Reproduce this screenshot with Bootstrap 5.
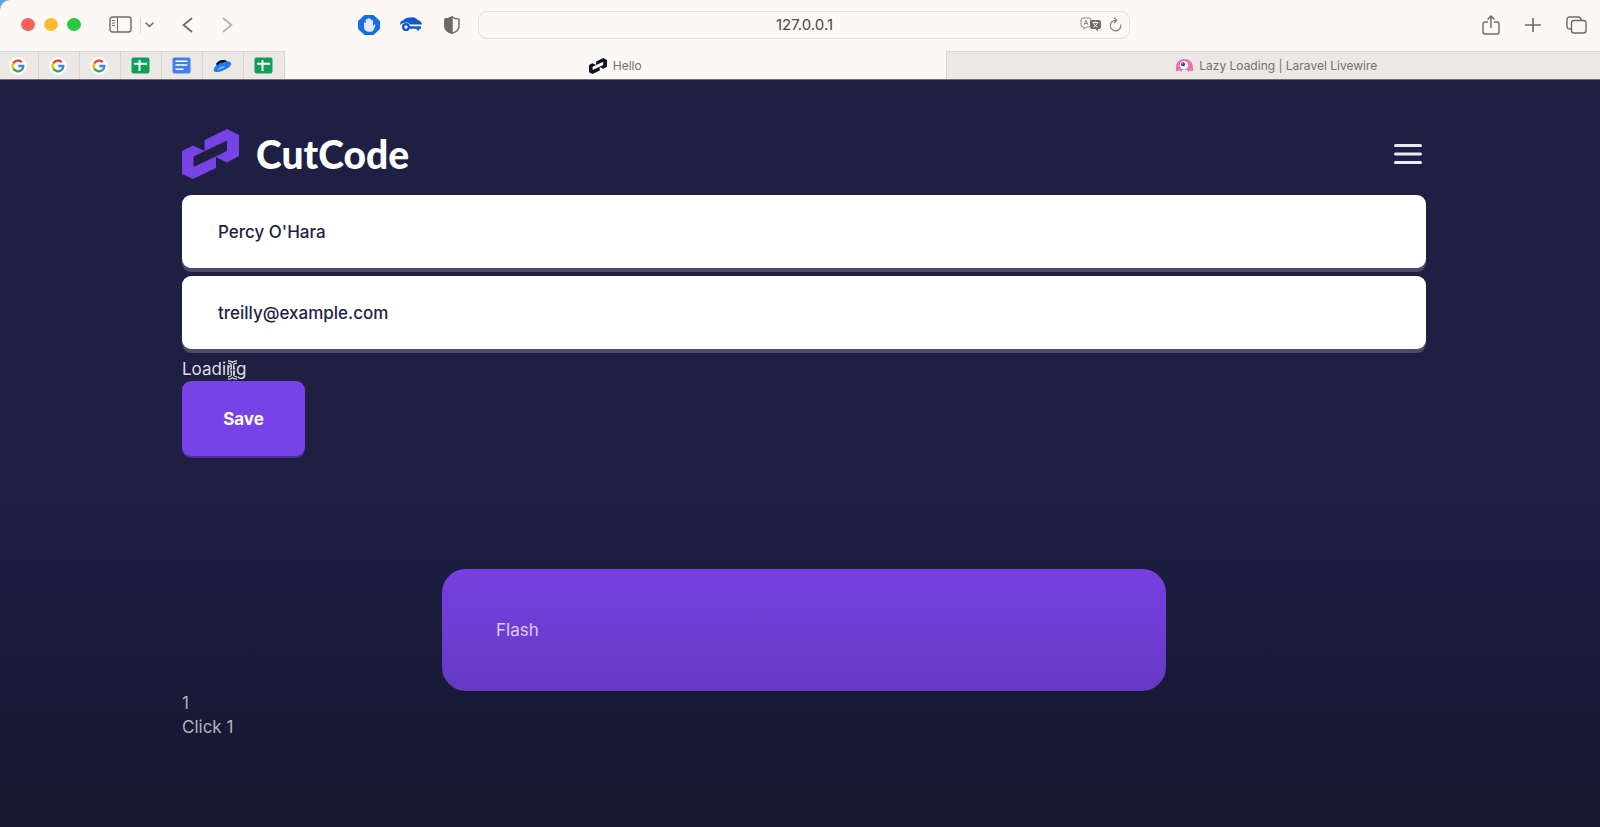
<!DOCTYPE html>
<html lang="en">
<head>
<meta charset="utf-8">
<meta name="viewport" content="width=device-width, initial-scale=1">
<title>Hello</title>
<link href="https://cdn.jsdelivr.net/npm/bootstrap@5.3.0/dist/css/bootstrap.min.css" rel="stylesheet">
<style>
  body { font-family: Inter, "Liberation Sans", sans-serif; background: #58a8dc; min-height: 100vh; overflow-x: hidden; }
  svg { display: block; flex: none; }
  .chrome { background: #fcf8f5; border-top-left-radius: 10px; color: #6d6966; }
  .toolbar { display: grid; grid-template-columns: 1fr 652px 1fr; height: 51px; padding: 0 0 2px 8px; }
  .chrome button { background: none; border: 0; padding: 0; color: inherit; }
  .lights { gap: 9px; margin-left: 13px; }
  .dot { width: 14px; height: 13px; border-radius: 50%; }
  .dot-close { background: #fc5f58; }
  .dot-min { background: #fcbb2e; }
  .dot-max { background: #28c840; }
  .history { gap: 29px; margin-left: 28px; }
  .extensions { gap: 20px; margin-right: 18px; }
  .actions { gap: 25px; padding-right: 13px; }
  .address { height: 28px; border: 1px solid #e4dfdc; border-radius: 9px; background: #fcf8f5; gap: 8px; padding-right: 7px; }
  .address input { background: none; border: 0; outline: 0; text-align: center; font-size: 15px; color: #4b4846; padding: 2px 0 0 58px; min-width: 0; }
  .tabstrip { height: 29px; margin-right: -8px; border-bottom: 1px solid #6f706a; font-size: 12px; }
  .tabstrip a { color: #75716f; text-decoration: none; }
  .wide-tab { flex: 1 1 0; gap: 6px; border-top: 1px solid transparent; }
  .idle { background: #ece8e5; border-top: 1px solid #dbd7d4; border-right: 1px solid #d8d4d1; }
  .pin { flex: 0 0 41px; padding-right: 2px; }
  .pin:first-child { flex-basis: 39px; }
  .idle-wide { border-left: 1px solid #d8d4d1; }
  .site { background: linear-gradient(#1e1f43 0%, #1e1f43 55%, #15162f 100%); color: #dcdce1; font-size: 17px; line-height: 24px; padding: 49px 174px 48px 182px; }
  .brand { font-family: Lato, sans-serif; font-weight: 900; font-size: 39px; line-height: 50px; color: #fff; text-decoration: none; gap: 17px; }
  .burger { background: none; border: 0; padding: 0 4px; }
  .field { height: 73px; border: 0; border-radius: 9px; padding: 0 36px; font-size: 17px; font-weight: 500; color: #1e1f43; background: #fff; box-shadow: 0 4px 0 #4b4b69; }
  .field:focus { color: #1e1f43; }
  .save { width: 123px; height: 75px; border: 0; border-radius: 9px; background: #7843e6; color: #fff; font-size: 17px; font-weight: 700; box-shadow: 0 2px 0 #4c2f98; }
  .cursor { position: absolute; left: 44px; top: 3px; }
  .flash { width: 58.2%; margin: 113px auto 0; padding: 49px 54px; border-radius: 24px; background: linear-gradient(#7640e0, #6539c4); color: #dccdf3; }
  .clicker { background: none; border: 0; padding: 0; color: inherit; line-height: 24px; }
  .foot { color: #b5b5b9; }
</style>
</head>
<body class="d-flex flex-column">
<svg width="0" height="0" class="position-absolute" aria-hidden="true">
  <symbol id="g" viewBox="0 0 18 18"><circle cx="9" cy="9" r="9" fill="#fff"/><g fill="none" stroke-width="2.4"><path d="M4.3 6.3A5.3 5.3 0 0 1 12.8 5.2" stroke="#e94335"/><path d="M4.4 11.7a5.3 5.3 0 0 1-.1-5.4" stroke="#fbbc05"/><path d="M12.6 12.9a5.3 5.3 0 0 1-8.2-1.2" stroke="#34a853"/><path d="M9.2 9h5.1a5.3 5.3 0 0 1-1.7 3.9" stroke="#4285f4"/></g></symbol>
  <symbol id="sheet" viewBox="0 0 19 17"><rect x=".5" y=".5" width="18" height="16" rx="2" fill="#109d58"/><path d="M8.5 3v11M3 6.8h13" stroke="#fff" stroke-width="2"/></symbol>
  <symbol id="mark-cc" viewBox="0 0 57 50"><path fill-rule="evenodd" d="M0 22L11 16.500 22.500 22V11L45 0 57 6v21L45 33.500 34 28V39L11 50 0 45zM11.500 27.500V38L45 22V11.500z" fill="currentColor"/></symbol>
</svg>

<header class="chrome">
  <div class="toolbar align-items-center">
    <div class="d-flex align-items-center">
      <div class="lights d-flex">
        <span class="dot dot-close"></span><span class="dot dot-min"></span><span class="dot dot-max"></span>
      </div>
      <button class="ms-4 ps-1" aria-label="Sidebar"><svg width="23" height="17" fill="none" stroke="currentColor" stroke-width="1.400"><rect x="1" y="1" width="21" height="15" rx="2.500"/><path d="M8.500 1v15M3 4.500h3M3 7h3M3 9.500h3" stroke-width="1"/></svg></button>
      <span class="vr ms-2 me-1 my-1 opacity-10"></span>
      <button aria-label="Tab groups"><svg width="9" height="6" fill="none" stroke="currentColor" stroke-width="1.500" stroke-linecap="round"><path d="M1 1l3.500 3.500L8 1"/></svg></button>
      <div class="history d-flex">
        <button aria-label="Back"><svg width="11" height="16" fill="none" stroke="currentColor" stroke-width="1.700" stroke-linecap="round"><path d="M9.500 1.500L1.500 8l8 6.500"/></svg></button>
        <button class="opacity-50" aria-label="Forward"><svg width="11" height="16" fill="none" stroke="currentColor" stroke-width="1.700" stroke-linecap="round"><path d="M1.500 1.500L9.500 8l-8 6.500"/></svg></button>
      </div>
      <div class="extensions d-flex align-items-center ms-auto">
        <button aria-label="Ad blocker"><svg width="22" height="20"><path d="M6.500 0h9L22 6v8l-6.500 6h-9L0 14V6z" fill="#176ce8"/><path d="M6 8.500a.9.900 0 0 1 1.800-.3V5a.9.900 0 0 1 1.800 0V4a.9.900 0 0 1 1.800 0v.6a.9.900 0 0 1 1.800 0V6a.9.900 0 0 1 1.800 0v5.500l1-1.700c.5-.7 1.500-.2 1.300.6l-1.500 4c-.6 1.500-1.800 2.400-3.300 2.400h-1.500C8 16.800 6 15 6 12.500z" fill="#e6e8ee"/></svg></button>
        <button aria-label="VPN"><svg width="22" height="15"><path d="M0 8C0 5 1 4 3 3.500 5 1 8 0 11 .5c2-.5 5 .2 6 2 2 .5 5 2.500 5 5H10C8 4.500 2.500 5 0 8z" fill="#1058cf"/><circle cx="6" cy="10" r="2.900" fill="none" stroke="#1058cf" stroke-width="2.400"/><path d="M9 10.500h12M18 10.500v3" stroke="#1058cf" stroke-width="2.400"/></svg></button>
        <button aria-label="Privacy report"><svg width="18" height="18" viewBox="-2 0 18 18" fill="none" stroke="currentColor" stroke-width="1.400"><path d="M8 1C6 2.500 3.500 3 1 3.200V10c0 4 3 6 7 7.300 4-1.300 7-3.300 7-7.300V3.200C12.500 3 10 2.500 8 1z"/><path d="M8 1C6 2.500 3.500 3 1 3.200V10c0 4 3 6 7 7.300z" fill="currentColor"/></svg></button>
      </div>
    </div>
    <div class="address d-flex align-items-center">
      <input class="flex-grow-1" aria-label="Address" value="127.0.0.1">
      <button aria-label="Translate"><svg width="21" height="15"><path d="M3 1h6a2 2 0 0 1 2 2v5a2 2 0 0 1-2 2H6l-2.200 2v-2H3a2 2 0 0 1-2-2V3a2 2 0 0 1 2-2z" fill="none" stroke="#8e8a87"/><path d="M4 8l2-5 2 5M4.600 6.500h3" fill="none" stroke="#8e8a87"/><path d="M12 3h7a2 2 0 0 1 2 2v5a2 2 0 0 1-2 2h-1v2.500L15.500 12H12a2 2 0 0 1-2-2V5a2 2 0 0 1 2-2z" fill="#716d6a"/><path d="M12.500 5.500h6M15.500 4.500v1M13.500 10c2-1 3.500-2.500 4-4.500M13.500 5.500c.5 2 2 3.500 4 4.500" stroke="#fff" fill="none" stroke-width=".9"/></svg></button>
      <button aria-label="Reload"><svg width="13" height="15" fill="none" stroke="#85817e" stroke-width="1.200"><path d="M11.800 7.500A5.300 5.300 0 1 1 7 3.300M5 .8l2.800 2.500L5 6"/></svg></button>
    </div>
    <div class="actions d-flex align-items-center justify-content-end">
      <button aria-label="Share"><svg width="18" height="20" fill="none" stroke="currentColor" stroke-width="1.400"><path d="M6 7H3a2 2 0 0 0-2 2v8a2 2 0 0 0 2 2h12a2 2 0 0 0 2-2V9a2 2 0 0 0-2-2h-3M9 13V1.500M5.500 4.500L9 1l3.500 3.500"/></svg></button>
      <button aria-label="New tab"><svg width="16" height="16" stroke="currentColor" stroke-width="1.600"><path d="M8 1v14M0 8h16"/></svg></button>
      <button aria-label="All tabs"><svg width="21" height="18" fill="none" stroke="currentColor" stroke-width="1.400"><rect x="5.500" y="4.500" width="14.500" height="12.500" rx="2.500"/><path d="M5.500 13H3.500A2.500 2.500 0 0 1 1 10.500v-7A2.500 2.500 0 0 1 3.500 1h9A2.500 2.500 0 0 1 15 3.500v1"/></svg></button>
    </div>
  </div>
  <nav class="tabstrip d-flex" aria-label="Tabs">
    <a href="#" class="pin idle d-flex align-items-center justify-content-center" aria-label="Google"><svg width="18" height="18"><use href="#g"/></svg></a>
    <a href="#" class="pin idle d-flex align-items-center justify-content-center" aria-label="Google"><svg width="18" height="18"><use href="#g"/></svg></a>
    <a href="#" class="pin idle d-flex align-items-center justify-content-center" aria-label="Google"><svg width="18" height="18"><use href="#g"/></svg></a>
    <a href="#" class="pin idle d-flex align-items-center justify-content-center" aria-label="Sheet"><svg width="19" height="17"><use href="#sheet"/></svg></a>
    <a href="#" class="pin idle d-flex align-items-center justify-content-center" aria-label="Document"><svg width="19" height="17"><rect x=".5" y=".5" width="18" height="16" rx="2" fill="#4080ee"/><path d="M3.500 4.300h12M3.500 8h12M3.500 12.200h8" stroke="#fff" stroke-width="1.500"/></svg></a>
    <a href="#" class="pin idle d-flex align-items-center justify-content-center" aria-label="Disc"><svg width="19" height="14"><path d="M1 12C0 9 4 5 9 3c4-1.500 8-1 9 1 .6 2-1 4-4 5.500C10 12 3 14.500 1 12z" fill="#1d78f0"/><path d="M3 5C5 1.500 9 .3 13 1.500c1 .5 1 1-.5 1.500C9 3 6 4.500 4 6.500z" fill="#06060c"/><path d="M4 10.500c2-2 5-3.500 8-3.500 0 1.500-4 3.500-8 3.500z" fill="#7dbdf8"/></svg></a>
    <a href="#" class="pin idle d-flex align-items-center justify-content-center" aria-label="Sheet"><svg width="19" height="17"><use href="#sheet"/></svg></a>
    <a href="#" class="wide-tab d-flex align-items-center justify-content-center" aria-current="page"><svg width="18" height="16" color="#12112a"><use href="#mark-cc"/></svg><span>Hello</span></a>
    <a href="#" class="wide-tab idle idle-wide d-flex align-items-center justify-content-center"><svg width="17" height="13"><path d="M0 8.500C0 3.500 3.500 0 8.500 0S17 3.500 17 8.500V12h-2l-1-1-1.500 2-1.500-2H6.500L5 13l-1.500-2L2 12H0z" fill="#ee6fac"/><ellipse cx="8" cy="6.300" rx="4.200" ry="4.200" fill="#fff"/><circle cx="7" cy="5.300" r="2" fill="#31307c"/><circle cx="6.500" cy="4.800" r=".6" fill="#fff"/></svg><span>Lazy Loading | Laravel Livewire</span></a>
  </nav>
</header>

<main class="site flex-grow-1">
  <div class="d-flex align-items-center justify-content-between">
    <a href="#" class="brand d-flex align-items-center"><svg width="57" height="50" color="#7843e6"><use href="#mark-cc"/></svg>CutCode</a>
    <button class="burger" aria-label="Menu"><svg width="28" height="20" stroke="#ececf2" stroke-width="3" stroke-linecap="round"><path d="M1.500 1.500h25M1.500 10h25M1.500 18.500h25"/></svg></button>
  </div>
  <form class="mt-3">
    <input class="form-control field mb-2" aria-label="Name" value="Percy O'Hara">
    <input class="form-control field mb-2" type="email" aria-label="Email" value="treilly@example.com">
    <div class="position-relative">Loading
      <svg class="cursor" width="13" height="20" fill="none"><path d="M2 2c3 0 4 1 4.500 2.500C7 3 8 2 11 2M2 18c3 0 4-1 4.500-2.500C7 17 8 18 11 18M6.500 4v12M4 10h5" stroke="#dcdce1" stroke-width="3.600"/><path d="M2 2c3 0 4 1 4.500 2.500C7 3 8 2 11 2M2 18c3 0 4-1 4.500-2.500C7 17 8 18 11 18M6.500 4v12M4 10h5" stroke="#292a45" stroke-width="1.200"/></svg>
    </div>
    <button class="save" type="button">Save</button>
  </form>
  <div class="flash" role="status">Flash</div>
  <div class="foot">
    <div>1</div>
    <button class="clicker" type="button">Click 1</button>
  </div>
</main>
<script src="https://cdn.jsdelivr.net/npm/bootstrap@5.3.0/dist/js/bootstrap.bundle.min.js"></script>
</body>
</html>
